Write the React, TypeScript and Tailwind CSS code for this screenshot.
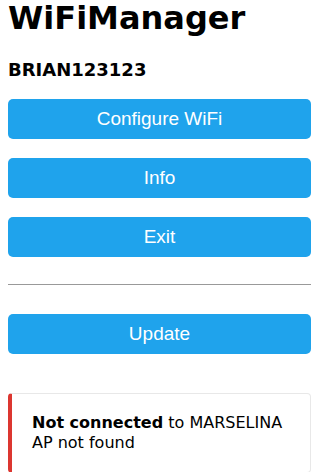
export default function App() {
  const buttons = ["Configure WiFi", "Info", "Exit"];
  return (
    <div className="min-h-screen bg-white px-2 text-black" style={{ fontFamily: '"DejaVu Sans", Verdana, sans-serif' }}>
      <h1 className="text-[32px] font-bold leading-[37px]">WiFiManager</h1>
      <h3 className="mt-[22px] text-[18px] font-bold leading-[22px]">BRIAN123123</h3>
      <div className="mt-[18px] flex flex-col gap-[19px]">
        {buttons.map((b) => (
          <button
            key={b}
            className="h-10 w-full rounded-[5px] bg-[#1fa3ec] text-[19px] text-white"
            style={{ fontFamily: '"Liberation Sans", Arial, sans-serif' }}
          >
            {b}
          </button>
        ))}
      </div>
      <hr className="mt-[27px] border-t border-[#999]" />
      <button
        className="mt-[29px] h-10 w-full rounded-[5px] bg-[#1fa3ec] text-[19px] text-white"
        style={{ fontFamily: '"Liberation Sans", Arial, sans-serif' }}
      >
        Update
      </button>
      <div className="mt-[39px] rounded-[4px] border border-[#e8e8e8] border-l-4 border-l-[#dc3630] pl-5 pr-3 py-[19px] text-[16px] leading-5">
        <strong>Not connected</strong> to MARSELINA<br />AP not found
      </div>
    </div>
  );
}
